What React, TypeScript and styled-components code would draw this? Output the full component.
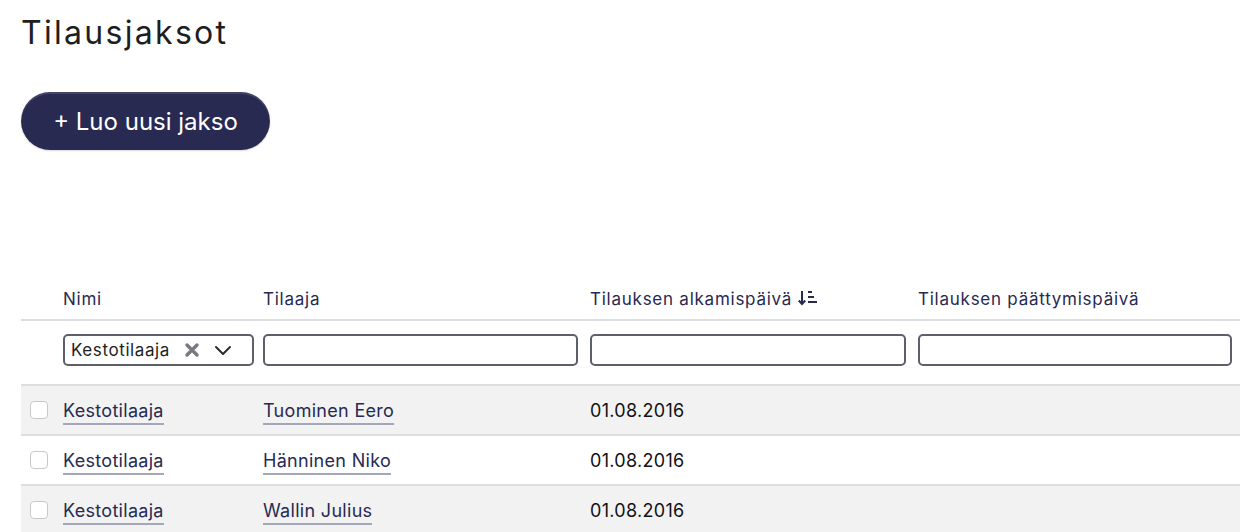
import styled, { createGlobalStyle } from 'styled-components';

const GlobalStyle = createGlobalStyle`
  body {
    margin: 0;
    background: #ffffff;
    font-family: Inter, "Noto Sans", sans-serif;
    color: #1e1e24;
  }
`;

interface Row {
  name: string;
  customer: string;
  start: string;
  end: string;
}

const rows: Row[] = [
  { name: 'Kestotilaaja', customer: 'Tuominen Eero', start: '01.08.2016', end: '' },
  { name: 'Kestotilaaja', customer: 'Hänninen Niko', start: '01.08.2016', end: '' },
  { name: 'Kestotilaaja', customer: 'Wallin Julius', start: '01.08.2016', end: '' },
];

const SortIcon = () => (
  <svg width="20" height="16" viewBox="0 0 20 16" fill="none" stroke="#272a52" strokeWidth="2" strokeLinecap="butt">
    <path d="M4 1v13" />
    <path d="M0.8 10.5 4 14l3.2-3.5" />
    <path d="M10 2h4" />
    <path d="M10 7h6" />
    <path d="M10 12h9" />
  </svg>
);

const ClearIcon = () => (
  <svg width="16" height="16" viewBox="0 0 16 16" stroke="#76797f" strokeWidth="3.4" strokeLinecap="round">
    <path d="M3 3l10 10M13 3 3 13" />
  </svg>
);

const ChevronIcon = () => (
  <svg width="18" height="12" viewBox="0 0 18 12" fill="none" stroke="#2a2c35" strokeWidth="2" strokeLinecap="round" strokeLinejoin="round">
    <path d="M2 3l7 7 7-7" />
  </svg>
);

const App = () => {
  return (
    <Page>
      <GlobalStyle />
      <Title>Tilausjaksot</Title>
      <CreateButton>+ Luo uusi jakso</CreateButton>

      <Table>
        <colgroup>
          <col style={{ width: 42 }} />
          <col style={{ width: 200 }} />
          <col style={{ width: 327 }} />
          <col style={{ width: 328 }} />
          <col />
        </colgroup>
        <thead>
          <HeadRow>
            <HeadCell />
            <HeadCell>Nimi</HeadCell>
            <HeadCell>Tilaaja</HeadCell>
            <HeadCell>
              <SortLabel>
                Tilauksen alkamispäivä <SortIcon />
              </SortLabel>
            </HeadCell>
            <HeadCell>Tilauksen päättymispäivä</HeadCell>
          </HeadRow>
          <FilterRow>
            <FilterCell />
            <FilterCell>
              <SelectBox>
                <SelectValue>Kestotilaaja</SelectValue>
                <ClearIcon />
                <ChevronIcon />
              </SelectBox>
            </FilterCell>
            <FilterCell>
              <TextInput />
            </FilterCell>
            <FilterCell>
              <TextInput />
            </FilterCell>
            <FilterCell>
              <TextInput />
            </FilterCell>
          </FilterRow>
        </thead>
        <tbody>
          {rows.map((row, i) => (
            <BodyRow key={i} $striped={i % 2 === 0}>
              <CheckCell>
                <Checkbox />
              </CheckCell>
              <Cell>
                <Link>{row.name}</Link>
              </Cell>
              <Cell>
                <Link>{row.customer}</Link>
              </Cell>
              <Cell>{row.start}</Cell>
              <Cell>{row.end}</Cell>
            </BodyRow>
          ))}
        </tbody>
      </Table>
    </Page>
  );
};

export default App;

const Page = styled.div`
  padding: 12px 0 0 21px;
  overflow: hidden;
`;

const Title = styled.h1`
  margin: 0;
  font-family: Inter, sans-serif;
  font-size: 32px;
  line-height: 42px;
  font-weight: 400;
  letter-spacing: 2.3px;
  color: #1e1e22;
`;

const CreateButton = styled.button`
  margin-top: 38px;
  height: 58px;
  width: 249px;
  border: none;
  border-radius: 29px;
  background: #282a52;
  box-shadow: inset 0 2px 0 rgba(255, 255, 255, 0.12), 0 1px 2px rgba(0, 0, 0, 0.15);
  color: #ffffff;
  font-family: Inter, sans-serif;
  font-size: 24px;
  font-weight: 400;
  cursor: pointer;
  display: block;
`;

const Table = styled.table`
  margin-top: 139px;
  width: 1219px;
  border-collapse: collapse;
  table-layout: fixed;
`;

const HeadRow = styled.tr`
  border-bottom: 2px solid #dcdde1;
`;

const HeadCell = styled.th`
  text-align: left;
  font-weight: 400;
  font-size: 17px;
  line-height: 20px;
  color: #272a52;
  padding: 0 9px 10px 0;
  letter-spacing: 0.75px;
`;

const SortLabel = styled.span`
  display: inline-flex;
  align-items: center;
  gap: 6px;

  svg {
    margin-top: -2px;
  }
`;

const FilterRow = styled.tr`
  border-bottom: 2px solid #dcdde1;
`;

const FilterCell = styled.td`
  padding: 13px 12px 18px 0;

  &:last-child {
    padding-right: 8px;
  }
`;

const SelectBox = styled.div`
  box-sizing: border-box;
  height: 32px;
  width: 191px;
  border: 2px solid #5d6068;
  border-radius: 5px;
  display: flex;
  align-items: center;
  padding: 0 20px 0 6px;
  gap: 14px;
`;

const SelectValue = styled.span`
  flex: 1;
  font-size: 17px;
  letter-spacing: 0.6px;
  color: #1e1e24;
`;

const TextInput = styled.input`
  box-sizing: border-box;
  display: block;
  width: 100%;
  height: 32px;
  border: 2px solid #5d6068;
  border-radius: 5px;
  background: #ffffff;
  outline: none;
`;

const BodyRow = styled.tr<{ $striped: boolean }>`
  background: ${(p) => (p.$striped ? '#f2f2f2' : '#ffffff')};
  border-bottom: 2px solid #dcdde1;
  height: 50px;
`;

const Cell = styled.td`
  padding: 0 9px 0 0;
  font-size: 18px;
  letter-spacing: 0.3px;
  color: #111114;
  vertical-align: middle;
`;

const CheckCell = styled.td`
  padding: 0 0 0 9px;
  vertical-align: middle;
`;

const Checkbox = styled.span`
  display: block;
  box-sizing: border-box;
  width: 18px;
  height: 18px;
  border: 1px solid #c8c8cd;
  border-radius: 4px;
  background: #ffffff;
`;

const Link = styled.a`
  color: #272a52;
  text-decoration: none;
  border-bottom: 2px solid #a4a6ba;
  padding-bottom: 2px;
  cursor: pointer;
`;
